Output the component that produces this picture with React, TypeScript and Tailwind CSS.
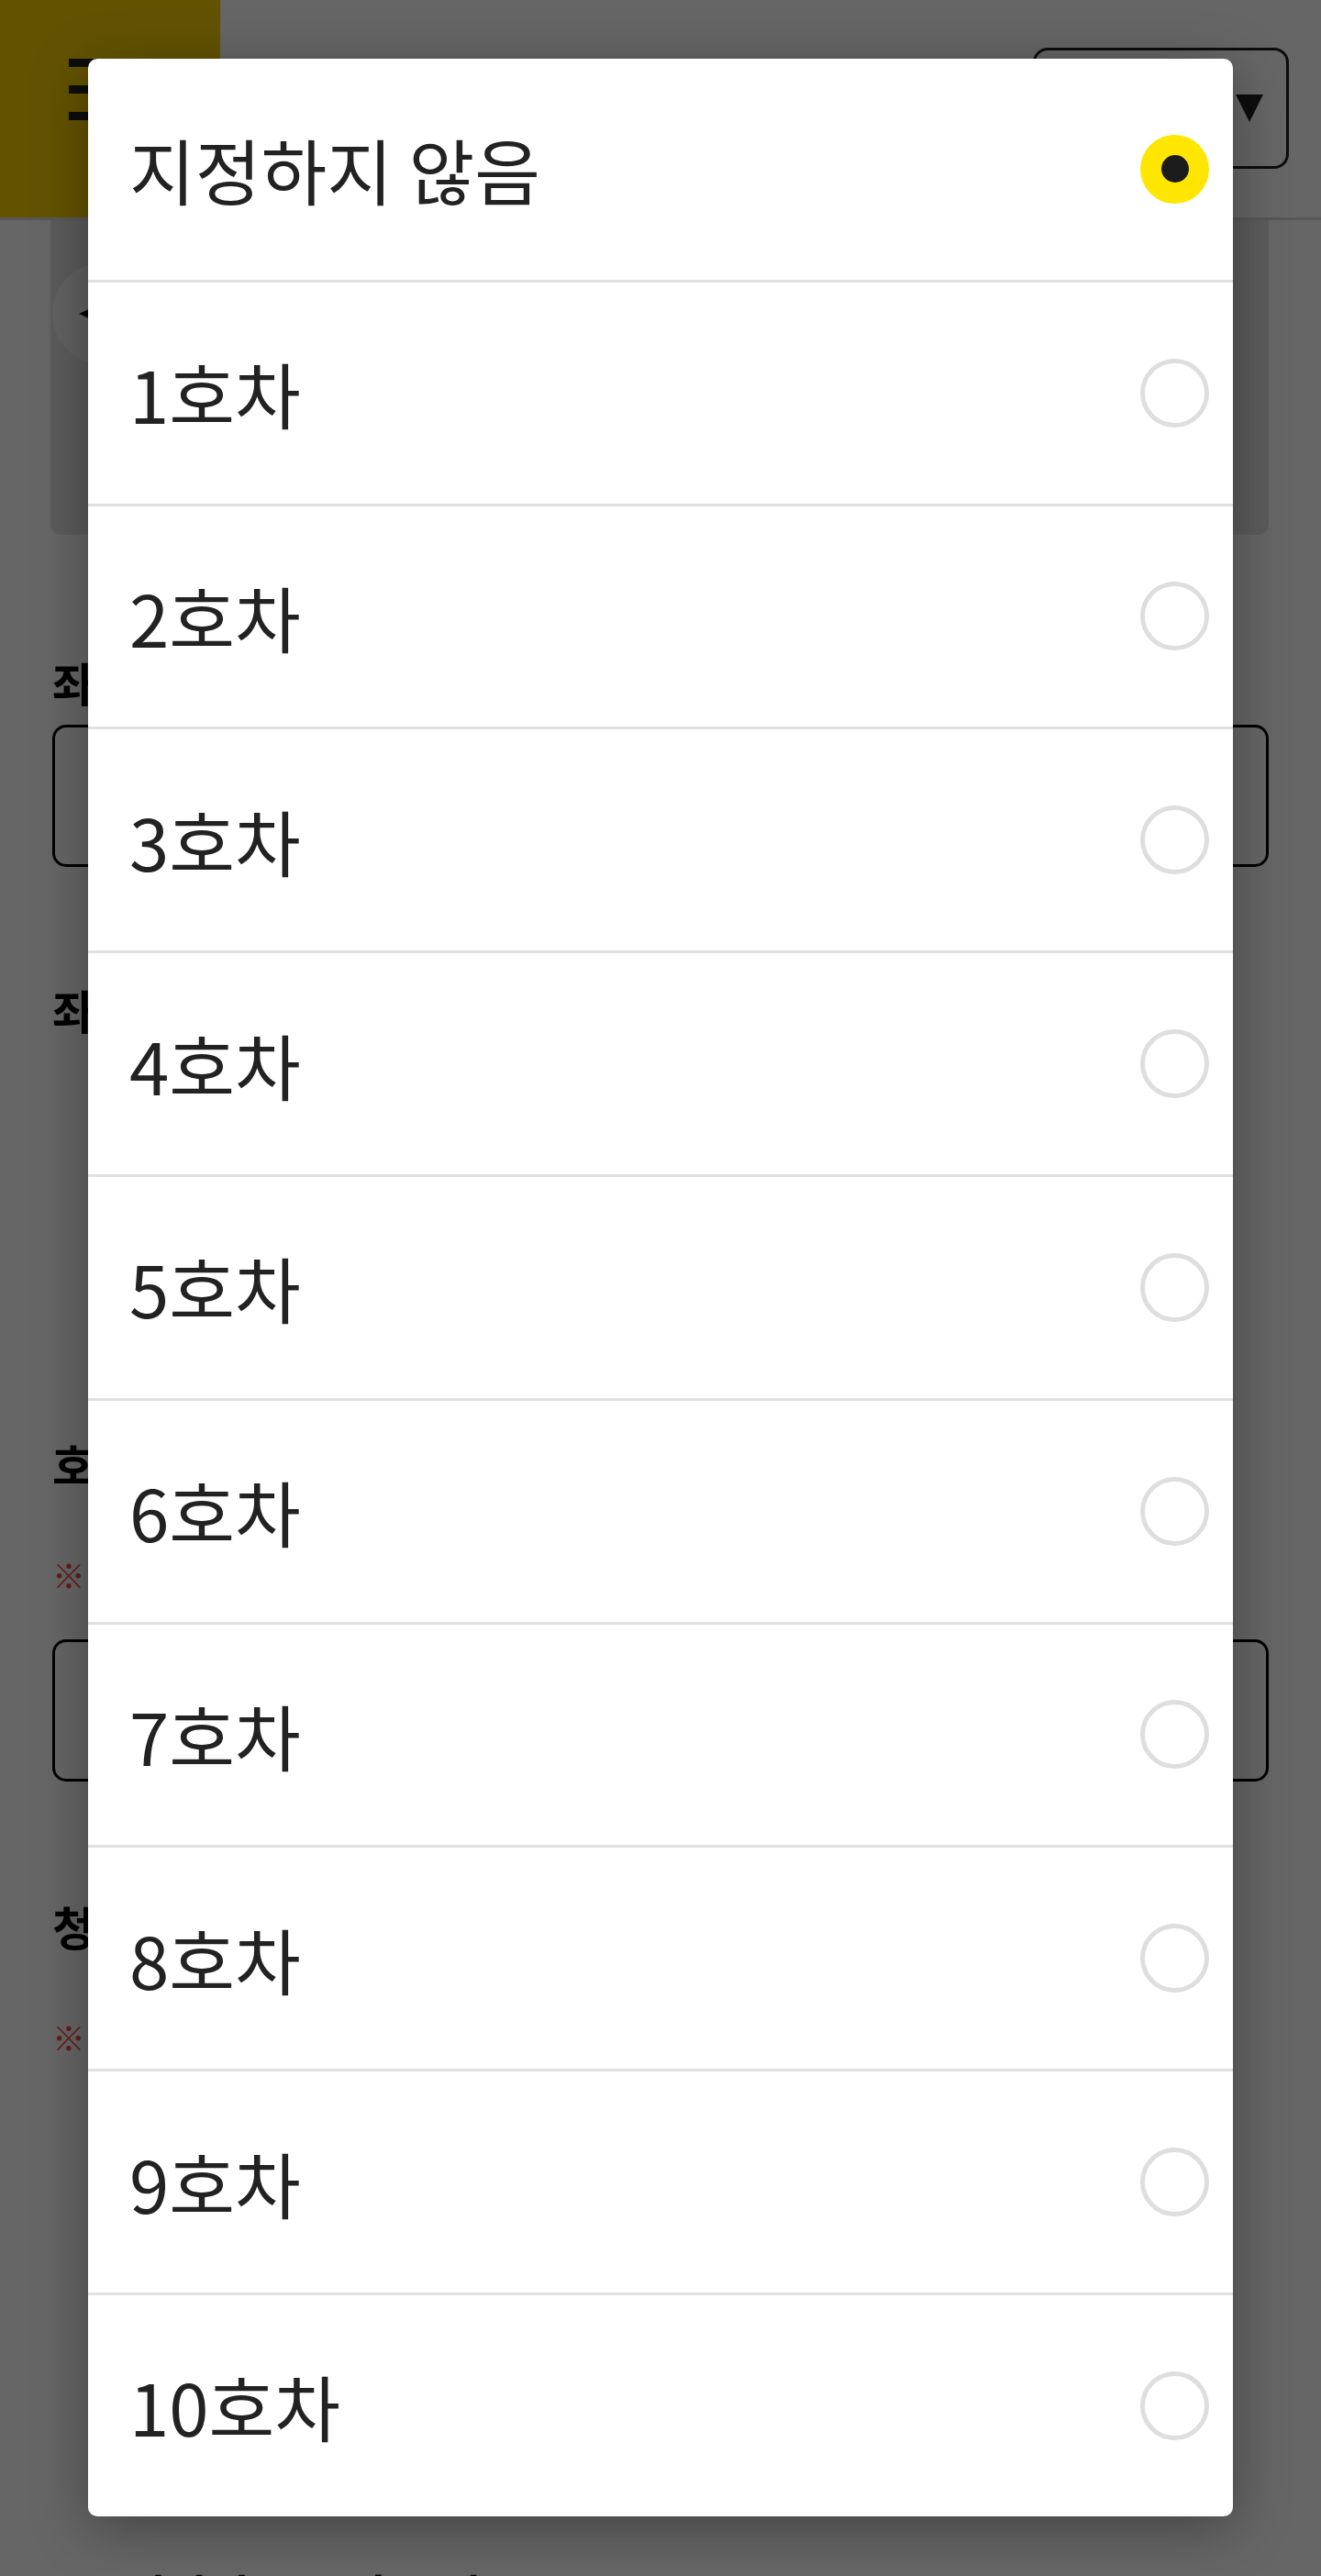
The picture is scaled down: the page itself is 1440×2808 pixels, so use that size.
import React from "react";

const options = [
  "지정하지 않음",
  "1호차",
  "2호차",
  "3호차",
  "4호차",
  "5호차",
  "6호차",
  "7호차",
  "8호차",
  "9호차",
  "10호차",
];

function Label({ children, className = "" }: { children: React.ReactNode; className?: string }) {
  return <div className={"text-[50px] leading-[60px] font-bold text-black " + className}>{children}</div>;
}

function Note({ children, className = "" }: { children: React.ReactNode; className?: string }) {
  return <div className={"text-[36px] leading-[54px] text-[#ff4646] " + className}>{children}</div>;
}

export default function App() {
  const selected = 0;
  return (
    <div
      className="relative h-[2808px] overflow-hidden bg-white"
      style={{ fontFamily: '"Noto Sans CJK KR", "Noto Sans", sans-serif' }}
    >
      {/* underlying page */}
      <header className="flex h-[240px] border-b-[3px] border-[#dcdcdc]">
        <div className="flex h-full w-[240px] flex-col gap-[20px] bg-[#f8cf00] pl-[75px] pt-[64px]">
          <div className="h-[9px] w-[90px] bg-[#222]" />
          <div className="h-[9px] w-[90px] bg-[#222]" />
          <div className="h-[9px] w-[90px] bg-[#222]" />
        </div>
        <div className="flex-1" />
        <div className="mr-[35px] mt-[52px] flex h-[132px] w-[279px] items-center justify-between rounded-[16px] border-[3px] border-[#222] pl-[30px] pr-[25px]">
          <span className="text-[40px] text-[#222]">전체</span>
          <svg width="30" height="30" viewBox="0 0 30 30">
            <polygon points="0,0 30,0 15,30" fill="#222" />
          </svg>
        </div>
      </header>

      <div className="ml-[55px] mr-[57px] h-[343px] rounded-b-[12px] bg-[#e6e6e6] pl-[2px] pt-[47px]">
        <div className="flex h-[110px] w-[110px] items-center justify-start rounded-full bg-[#f6f6f6] pl-[29px]">
          <svg width="26" height="24" viewBox="0 0 26 24">
            <polygon points="0,12 26,0 26,24" fill="#111" />
          </svg>
        </div>
      </div>

      <div className="flex flex-col px-[57px]">
        <Label className="mt-[130px]">좌석 등급</Label>
        <div className="mt-[17px] h-[155px] rounded-[15px] border-[3px] border-black" />
        <Label className="mt-[125px]">좌석 위치</Label>
        <div className="flex h-[435px] items-center gap-[30px] pl-[80px]">
          <div className="h-[120px] w-[340px] rounded-[15px] bg-[#f2f2f2]" />
          <div className="h-[120px] w-[340px] rounded-[15px] bg-[#f2f2f2]" />
          <div className="h-[120px] w-[340px] rounded-[15px] bg-[#f2f2f2]" />
        </div>
        <Label>호차 선택</Label>
        <Note className="mt-[64px]">※ 호차를 선택해 주세요.</Note>
        <div className="mt-[44px] h-[155px] rounded-[15px] border-[3px] border-black" />
        <Label className="mt-[127px]">청구 정보</Label>
        <Note className="mt-[64px]">※ 청구 정보를 입력해 주세요.</Note>
        <div className="ml-[77px] mt-[550px] text-[50px] font-bold leading-[60px] text-black">개인정보 수집 동의</div>
      </div>

      {/* dim overlay */}
      <div className="absolute inset-0 bg-black/60" />

      {/* option sheet */}
      <div className="absolute left-[96px] right-[96px] top-[64px] overflow-hidden rounded-[10px] bg-white shadow-[0_12px_60px_rgba(0,0,0,0.35)]">
        {options.map((opt, i) => (
          <div
            key={opt}
            className={
              i === options.length - 1
                ? "flex h-[240.8px] items-center justify-between pl-[45px] pr-[26px]"
                : "flex h-[243.8px] items-center justify-between border-b-[3px] border-[#e0e0e0] pl-[45px] pr-[26px]"
            }
          >
            <span className="text-[78px] leading-[78px] text-[#222]">{opt}</span>
            {i === selected ? (
              <span className="flex h-[75px] w-[75px] items-center justify-center rounded-full bg-[#ffe600]">
                <span className="h-[30px] w-[30px] rounded-full bg-[#1c1c1c]" />
              </span>
            ) : (
              <span className="h-[75px] w-[75px] rounded-full border-[5px] border-[#dedede]" />
            )}
          </div>
        ))}
      </div>
    </div>
  );
}
